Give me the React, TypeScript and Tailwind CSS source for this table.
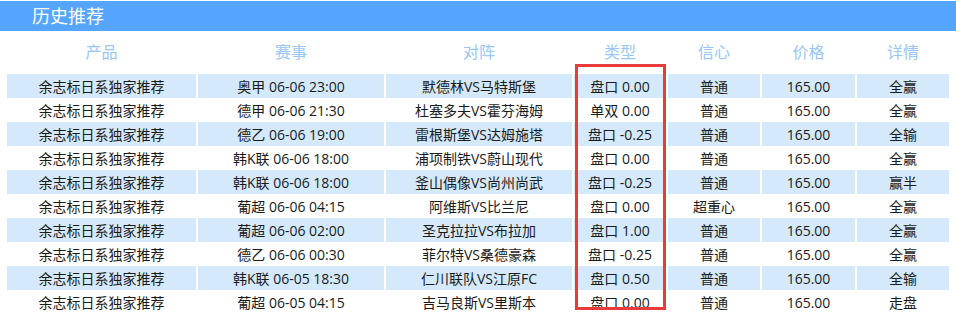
const rows = [
  ['奥甲 06-06 23:00', '默德林VS马特斯堡', '盘口 0.00', '普通', '全赢'],
  ['德甲 06-06 21:30', '杜塞多夫VS霍芬海姆', '单双 0.00', '普通', '全赢'],
  ['德乙 06-06 19:00', '雷根斯堡VS达姆施塔', '盘口 -0.25', '普通', '全输'],
  ['韩K联 06-06 18:00', '浦项制铁VS蔚山现代', '盘口 0.00', '普通', '全赢'],
  ['韩K联 06-06 18:00', '釜山偶像VS尚州尚武', '盘口 -0.25', '普通', '赢半'],
  ['葡超 06-06 04:15', '阿维斯VS比兰尼', '盘口 0.00', '超重心', '全赢'],
  ['葡超 06-06 02:00', '圣克拉拉VS布拉加', '盘口 1.00', '普通', '全赢'],
  ['德乙 06-06 00:30', '菲尔特VS桑德豪森', '盘口 -0.25', '普通', '全赢'],
  ['韩K联 06-05 18:30', '仁川联队VS江原FC', '盘口 0.50', '普通', '全输'],
  ['葡超 06-05 04:15', '吉马良斯VS里斯本', '盘口 0.00', '普通', '走盘'],
];

const heads = ['产品', '赛事', '对阵', '类型', '信心', '价格', '详情'];

const cols = 'grid grid-cols-[189px_186px_186px_92px_92px_93px_92px] gap-x-[2px]';

export default function App() {
  return (
    <div
      className="w-[956px] h-[315px] overflow-hidden bg-white pt-[1px]"
      style={{ fontFamily: '"Open Sans", "Noto Sans CJK SC", sans-serif' }}
    >
      <div className="h-[30px] bg-[#55a5fe] pl-[32px] flex items-center text-white text-[18px]">
        历史推荐
      </div>

      <div className="relative pl-[7px]">
        <div className={`${cols} h-[43px] items-center text-[16px] text-[#99c6f4] pb-[1px]`}>
          {heads.map((h) => (
            <div key={h} className="text-center">
              {h}
            </div>
          ))}
        </div>

        {rows.map((r, i) => (
          <div key={i} className={`${cols} h-[24px] text-[14px] text-[#1a1a1a]`}>
            {['余志标日系独家推荐', r[0], r[1], r[2], r[3], '165.00', r[4]].map((c, j) => (
              <div
                key={j}
                className={`flex items-center justify-center ${i % 2 === 0 ? 'bg-[#d5e9fc]' : ''}`}
              >
                {c}
              </div>
            ))}
          </div>
        ))}

        {/* highlight box over the type column */}
        <div className="absolute left-[575px] top-[33px] w-[91px] h-[246px] border-[3px] border-[#e93b3b] pointer-events-none" />
      </div>
    </div>
  );
}
